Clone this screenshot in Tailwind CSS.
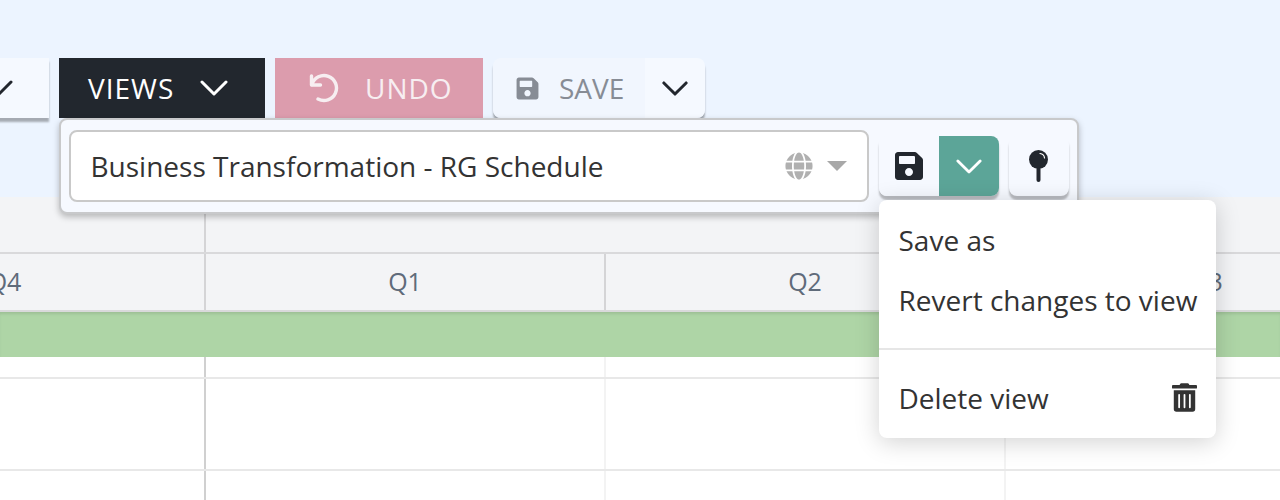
<!DOCTYPE html>
<html lang="en">
<head>
    <meta charset="UTF-8">
    <title>Views toolbar</title>
    <script src="https://cdn.jsdelivr.net/npm/@tailwindcss/browser@4"></script>
</head>
<body class="bg-white font-['Open_Sans',sans-serif] overflow-hidden">
<div class="relative w-[1280px] h-[500px] overflow-hidden">

    <!-- toolbar -->
    <div class="h-[197px] bg-[#ecf4ff] pt-[58px]">
        <div class="flex gap-[10px] -ml-[51px]">
            <button class="w-[100px] h-[60px] bg-[#f5f9ff] shadow-[0_4px_2px_rgba(0,0,0,0.3)] flex items-center justify-end pr-[36px]">
                <svg class="w-[28px] h-[16px]" viewBox="0 0 28 16" fill="none" stroke="#22272e" stroke-width="3" stroke-linecap="round" stroke-linejoin="round"><path d="M2 2l12 12 12-12"/></svg>
            </button>
            <button class="w-[206px] h-[60px] bg-[#22272e] text-white text-[28px] tracking-[1px] flex items-center pl-[29px] gap-[26px]">
                VIEWS
                <svg class="w-[28px] h-[16px]" viewBox="0 0 28 16" fill="none" stroke="currentColor" stroke-width="3" stroke-linecap="round" stroke-linejoin="round"><path d="M2 2l12 12 12-12"/></svg>
            </button>
            <button class="w-[208px] h-[60px] bg-[#dc9cad] text-[#f7eef1] text-[28px] tracking-[1px] flex items-center pl-[34px] gap-[26px]">
                <svg class="w-[30px] h-[30px]" viewBox="0 0 30 30" fill="none" stroke="currentColor" stroke-width="3.4" stroke-linecap="round" stroke-linejoin="round"><path d="M2.5 3v9h9"/><path d="M3 11.5A12.5 12.5 0 1 1 9 26"/></svg>
                UNDO
            </button>
            <div class="flex w-[212px] h-[60px] rounded-lg shadow-[0_4px_2px_rgba(0,0,0,0.3)] overflow-hidden">
                <button class="w-[152px] bg-[#f1f6fe] text-[#878c95] text-[28px] flex items-center pl-[22px] gap-[19px]">
                    <svg class="w-[25px] h-[25px]" viewBox="0 0 448 512" fill="currentColor"><path d="M433.941 129.941l-83.882-83.882A48 48 0 0 0 316.118 32H48C21.49 32 0 53.49 0 80v352c0 26.51 21.49 48 48 48h352c26.51 0 48-21.49 48-48V163.882a48 48 0 0 0-14.059-33.941zM224 416c-35.346 0-64-28.654-64-64 0-35.346 28.654-64 64-64s64 28.654 64 64c0 35.346-28.654 64-64 64zm96-304.52V212c0 6.627-5.373 12-12 12H76c-6.627 0-12-5.373-12-12V108c0-6.627 5.373-12 12-12h228.52c3.183 0 6.235 1.264 8.485 3.515l3.48 3.48A11.996 11.996 0 0 1 320 111.48z"/></svg>
                    SAVE
                </button>
                <button class="flex-1 bg-[#f5f9ff] flex items-center justify-center">
                    <svg class="w-[26px] h-[15px]" viewBox="0 0 28 16" fill="none" stroke="#22272e" stroke-width="3.2" stroke-linecap="round" stroke-linejoin="round"><path d="M2 2l12 12 12-12"/></svg>
                </button>
            </div>
        </div>
    </div>

    <!-- schedule table -->
    <div class="text-[25px] text-[#5f6b7a]">
        <div class="flex -ml-[195px] h-[57px] bg-[#f3f4f6] border-b-2 border-[#d9d9db]">
            <div class="w-[401px] border-r-2 border-[#d4d4d6]"></div>
            <div class="flex-1"></div>
        </div>
        <div class="flex -ml-[195px] h-[58px] bg-[#f3f4f6] border-b-2 border-[#d9d9db]">
            <div class="w-[401px] shrink-0 border-r-2 border-[#d4d4d6] flex items-center justify-center">Q4</div>
            <div class="w-[400px] shrink-0 border-r-2 border-[#d4d4d6] flex items-center justify-center">Q1</div>
            <div class="w-[400px] shrink-0 border-r-2 border-[#d4d4d6] flex items-center justify-center">Q2</div>
            <div class="w-[400px] shrink-0 flex items-center justify-center">Q3</div>
        </div>
        <div class="h-[45px] bg-[#aed5a6] shadow-[inset_0_3px_3px_-1px_rgba(0,0,0,0.1)]"></div>
        <div class="flex -ml-[195px] h-[22px] border-b-2 border-[#e8e8e8]">
            <div class="w-[401px] shrink-0 border-r-2 border-[#d0d0d0]"></div>
            <div class="w-[400px] shrink-0 border-r-2 border-[#f3f3f3]"></div>
            <div class="w-[400px] shrink-0 border-r-2 border-[#f3f3f3]"></div>
        </div>
        <div class="flex -ml-[195px] h-[92px] border-b-2 border-[#e8e8e8]">
            <div class="w-[401px] shrink-0 border-r-2 border-[#d0d0d0]"></div>
            <div class="w-[400px] shrink-0 border-r-2 border-[#f3f3f3]"></div>
            <div class="w-[400px] shrink-0 border-r-2 border-[#f3f3f3]"></div>
        </div>
        <div class="flex -ml-[195px] h-[29px]">
            <div class="w-[401px] shrink-0 border-r-2 border-[#d0d0d0]"></div>
            <div class="w-[400px] shrink-0 border-r-2 border-[#f3f3f3]"></div>
            <div class="w-[400px] shrink-0 border-r-2 border-[#f3f3f3]"></div>
        </div>
    </div>

    <!-- views popover -->
    <div class="absolute left-[59px] top-[118px] w-[1020px] h-[96px] bg-[#f6f9ff] border-2 border-[#c8c9cb] rounded-lg shadow-[0_3px_6px_rgba(0,0,0,0.25)] flex items-start pl-[8px] pt-[10px]">
        <div class="w-[800px] h-[72px] bg-white border-2 border-[#c9c9c9] rounded-lg flex items-center pl-[19.5px] pr-[20px] text-[28px] text-[#333] shrink-0">
            <span class="flex-1">Business Transformation - RG Schedule</span>
            <svg class="w-[28px] h-[28px] mr-[14px]" viewBox="0 0 496 512" fill="#b0b0b0"><path d="M336.5 160C322 70.7 287.8 8 248 8s-74 62.7-88.5 152h177zM152 256c0 22.2 1.2 43.5 3.3 64h185.3c2.1-20.5 3.3-41.8 3.3-64s-1.2-43.5-3.3-64H155.3c-2.1 20.5-3.3 41.8-3.3 64zm324.7-96c-28.6-67.9-86.5-120.4-158-141.6 24.4 33.8 41.2 84.7 50 141.6h108zM177.2 18.4C105.8 39.6 47.8 92.1 19.3 160h108c8.7-56.9 25.5-107.8 49.9-141.6zM487.4 192H372.7c2.1 21 3.3 42.5 3.3 64s-1.2 43-3.3 64h114.6c5.5-20.5 8.6-41.8 8.6-64s-3.1-43.5-8.5-64zM120 256c0-21.5 1.2-43 3.3-64H8.6C3.2 212.5 0 233.8 0 256s3.2 43.5 8.6 64h114.6c-2-21-3.2-42.5-3.2-64zm39.5 96c14.5 89.3 48.7 152 88.5 152s74-62.7 88.5-152h-177zm159.3 141.6c71.4-21.2 129.4-73.7 158-141.6h-108c-8.8 56.9-25.6 107.8-50 141.6zM19.3 352c28.6 67.9 86.5 120.4 158 141.6-24.4-33.8-41.2-84.7-50-141.6h-108z"/></svg>
            <span class="w-0 h-0 border-x-[10px] border-x-transparent border-t-[10px] border-t-[#a8a8a8]"></span>
        </div>
        <div class="flex mt-[6px] ml-[10px] h-[60px] rounded-lg shadow-[0_4px_2px_rgba(0,0,0,0.25)] overflow-hidden shrink-0">
            <button class="w-[60px] bg-[#f6f9ff] flex items-center justify-center">
                <svg class="w-[28px] h-[32px]" viewBox="0 0 448 512" fill="#22272e"><path d="M433.941 129.941l-83.882-83.882A48 48 0 0 0 316.118 32H48C21.49 32 0 53.49 0 80v352c0 26.51 21.49 48 48 48h352c26.51 0 48-21.49 48-48V163.882a48 48 0 0 0-14.059-33.941zM224 416c-35.346 0-64-28.654-64-64 0-35.346 28.654-64 64-64s64 28.654 64 64c0 35.346-28.654 64-64 64zm96-304.52V212c0 6.627-5.373 12-12 12H76c-6.627 0-12-5.373-12-12V108c0-6.627 5.373-12 12-12h228.52c3.183 0 6.235 1.264 8.485 3.515l3.48 3.48A11.996 11.996 0 0 1 320 111.48z"/></svg>
            </button>
            <button class="w-[60px] bg-[#5ca598] flex items-center justify-center">
                <svg class="w-[26px] h-[15px]" viewBox="0 0 28 16" fill="none" stroke="#fff" stroke-width="3" stroke-linecap="round" stroke-linejoin="round"><path d="M2 2l12 12 12-12"/></svg>
            </button>
        </div>
        <button class="mt-[6px] ml-[10px] w-[60px] h-[60px] bg-[#f6f9ff] rounded-lg shadow-[0_4px_2px_rgba(0,0,0,0.25)] flex items-center justify-center shrink-0 pr-[1px]">
            <svg class="w-[19px] h-[32px]" viewBox="0 0 19 32" fill="#22272e"><circle cx="9.5" cy="9.5" r="9.5"/><rect x="7.5" y="17" width="4" height="15" rx="2"/><path d="M11 3.5a5 5 0 0 1 4.5 4.5" fill="none" stroke="#fff" stroke-width="1.2" stroke-linecap="round"/></svg>
        </button>
    </div>

    <!-- save menu -->
    <div class="absolute left-[879px] top-[200px] w-[337px] h-[238px] bg-white rounded-lg shadow-[0_4px_24px_rgba(0,0,0,0.18)] text-[28px] text-[#333]">
        <div class="h-[150px] border-b-2 border-[#e6e6e6] pl-[19.5px] pt-[20px] flex flex-col gap-[20px] whitespace-nowrap">
            <span class="leading-[40px]">Save as</span>
            <span class="leading-[40px]">Revert changes to view</span>
        </div>
        <div class="flex items-center justify-between pl-[19.5px] pr-[19px] pt-[28px]">
            <span class="leading-[40px]">Delete view</span>
            <svg class="w-[25px] h-[29px] -mt-[1px]" viewBox="0 0 448 512" fill="#333"><path d="M32 464a48 48 0 0 0 48 48h288a48 48 0 0 0 48-48V128H32zm272-256a16 16 0 0 1 32 0v224a16 16 0 0 1-32 0zm-96 0a16 16 0 0 1 32 0v224a16 16 0 0 1-32 0zm-96 0a16 16 0 0 1 32 0v224a16 16 0 0 1-32 0zM432 32H312l-9.4-18.7A24 24 0 0 0 281.1 0H166.8a23.72 23.72 0 0 0-21.4 13.3L136 32H16A16 16 0 0 0 0 48v32a16 16 0 0 0 16 16h416a16 16 0 0 0 16-16V48a16 16 0 0 0-16-16z"/></svg>
        </div>
    </div>
</div>
</body>
</html>
